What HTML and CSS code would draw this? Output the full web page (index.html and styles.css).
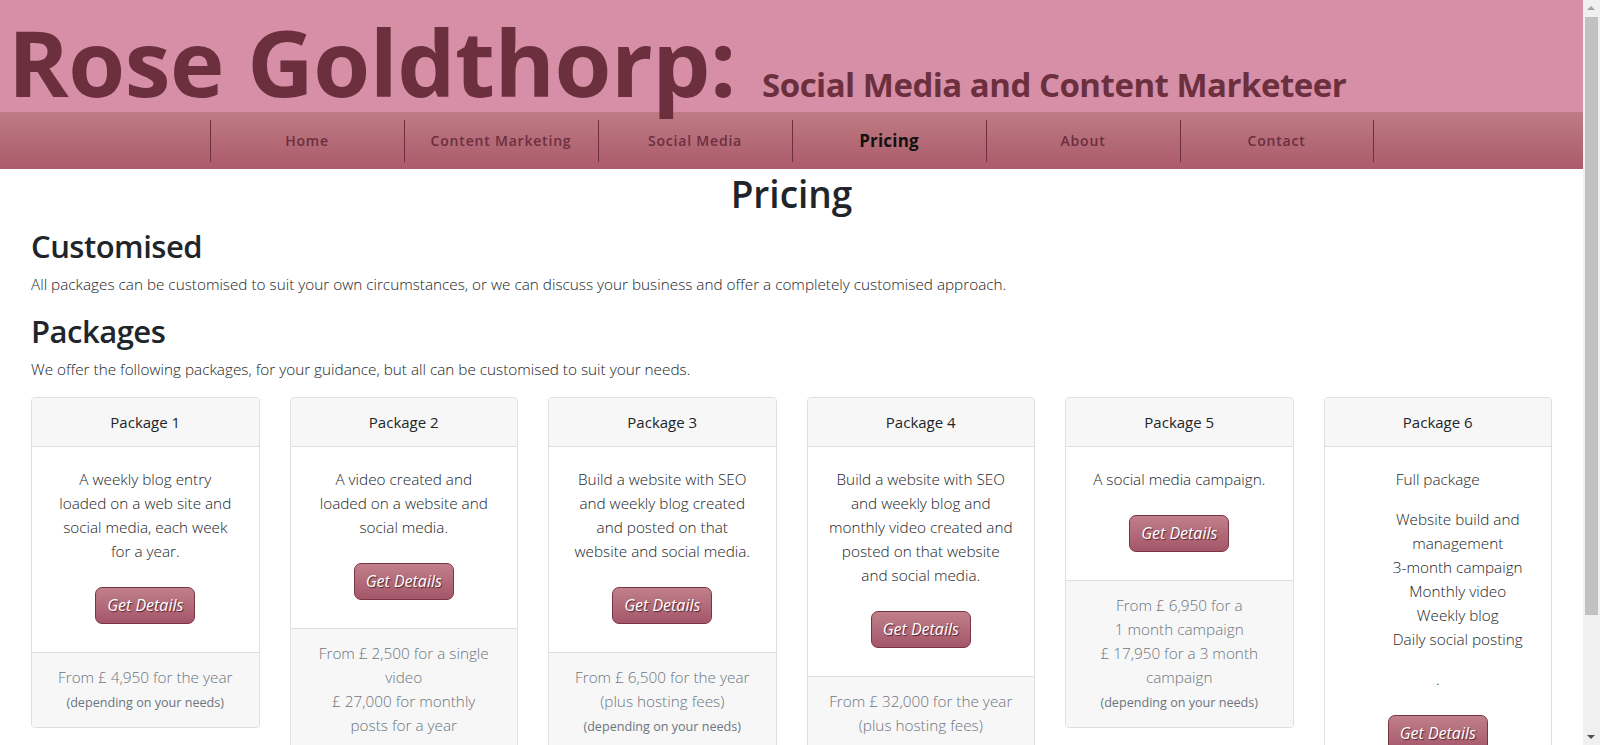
FILE: index.html
```html
<!DOCTYPE html>
<html lang="en">
<head>
<meta charset="utf-8">
<title>Rose Goldthorp: Pricing</title>
<link rel="stylesheet" href="styles.css">
</head>
<body>
<header class="masthead">
  <h1 class="site-title">Rose Goldthorp: <span class="tagline">Social Media and Content Marketeer</span></h1>
</header>
<nav class="mainnav">
  <ul class="nav-list">
    <li class="nav-item"><a href="#">Home</a></li>
    <li class="nav-item"><a href="#">Content Marketing</a></li>
    <li class="nav-item"><a href="#">Social Media</a></li>
    <li class="nav-item active"><a href="#">Pricing</a></li>
    <li class="nav-item"><a href="#">About</a></li>
    <li class="nav-item"><a href="#">Contact</a></li>
  </ul>
</nav>
<main class="content">
  <h1 class="page-title">Pricing</h1>
  <h2 class="section-title">Customised</h2>
  <p class="lead-text">All packages can be customised to suit your own circumstances, or we can discuss your business and offer a completely customised approach.</p>
  <h2 class="section-title">Packages</h2>
  <p class="lead-text">We offer the following packages, for your guidance, but all can be customised to suit your needs.</p>

  <div class="cards">
    <div class="card">
      <div class="card-header">Package 1</div>
      <div class="card-body">
        <p class="card-text">A weekly blog entry<br>loaded on a web site and<br>social media, each week<br>for a year.</p>
        <div class="btn-wrap"><a class="btn" href="#">Get Details</a></div>
      </div>
      <div class="card-footer">From £ 4,950 for the year<br><small>(depending on your needs)</small></div>
    </div>

    <div class="card">
      <div class="card-header">Package 2</div>
      <div class="card-body">
        <p class="card-text">A video created and<br>loaded on a website and<br>social media.</p>
        <div class="btn-wrap"><a class="btn" href="#">Get Details</a></div>
      </div>
      <div class="card-footer">From £ 2,500 for a single<br>video<br>£ 27,000 for monthly<br>posts for a year<br><small>(depending on your needs)</small></div>
    </div>

    <div class="card">
      <div class="card-header">Package 3</div>
      <div class="card-body">
        <p class="card-text">Build a website with SEO<br>and weekly blog created<br>and posted on that<br>website and social media.</p>
        <div class="btn-wrap"><a class="btn" href="#">Get Details</a></div>
      </div>
      <div class="card-footer">From £ 6,500 for the year<br>(plus hosting fees)<br><small>(depending on your needs)</small></div>
    </div>

    <div class="card">
      <div class="card-header">Package 4</div>
      <div class="card-body">
        <p class="card-text">Build a website with SEO<br>and weekly blog and<br>monthly video created and<br>posted on that website<br>and social media.</p>
        <div class="btn-wrap"><a class="btn" href="#">Get Details</a></div>
      </div>
      <div class="card-footer">From £ 32,000 for the year<br>(plus hosting fees)<br><small>(depending on your needs)</small></div>
    </div>

    <div class="card">
      <div class="card-header">Package 5</div>
      <div class="card-body">
        <p class="card-text">A social media campaign.</p>
        <div class="btn-wrap"><a class="btn" href="#">Get Details</a></div>
      </div>
      <div class="card-footer">From £ 6,950 for a<br>1 month campaign<br>£ 17,950 for a 3 month<br>campaign<br><small>(depending on your needs)</small></div>
    </div>

    <div class="card">
      <div class="card-header">Package 6</div>
      <div class="card-body">
        <p class="card-text">Full package</p>
        <ul class="feature-list">
          <li>Website build and<br>management</li>
          <li>3-month campaign</li>
          <li>Monthly video</li>
          <li>Weekly blog</li>
          <li>Daily social posting</li>
        </ul>
        <p class="card-text">.</p>
        <div class="btn-wrap"><a class="btn" href="#">Get Details</a></div>
      </div>
      <div class="card-footer">From £ 45,000 for the year<br>(plus hosting fees)<br><small>(depending on your needs)</small></div>
    </div>
  </div>
</main>

<div class="scrollbar" aria-hidden="true">
  <div class="sb-arrow sb-up"></div>
  <div class="sb-track"><div class="sb-thumb"></div></div>
  <div class="sb-arrow sb-down"></div>
</div>
</body>
</html>
```
FILE: styles.css
```css
* { box-sizing: border-box; }

html, body {
  margin: 0;
  padding: 0;
}

body {
  margin-right: 17px;
  font-family: "Open Sans", "Liberation Sans", sans-serif;
  font-size: 16px;
  font-weight: 300;
  line-height: 24px;
  color: #212529;
  background: #ffffff;
}

/* ---------- masthead ---------- */
.masthead {
  background: #d68fa6;
  height: 112px;
  padding: 12px 0 0 8px;
}

.site-title {
  margin: 0;
  font-family: "Open Sans", sans-serif;
  font-weight: 700;
  font-size: 92px;
  line-height: 100px;
  letter-spacing: -0.5px;
  color: #6b2f3e;
  white-space: nowrap;
}

.tagline {
  font-size: 33px;
  letter-spacing: -0.5px;
  margin-left: 3px;
}

/* ---------- navigation ---------- */
.mainnav {
  height: 57px;
  background: linear-gradient(to bottom, #be7c84 0%, #ab5a6a 100%);
  padding: 8px 0 7px;
}

.nav-list {
  list-style: none;
  margin: 0;
  padding: 0;
  display: flex;
  justify-content: center;
}

.nav-item {
  width: 194px;
  height: 42px;
  border-left: 1px solid #6e2f3f;
  display: flex;
  align-items: center;
  justify-content: center;
}

.nav-item:last-child {
  border-right: 1px solid #6e2f3f;
}

.nav-item a {
  font-family: "Open Sans", sans-serif;
  font-weight: 600;
  font-size: 14px;
  letter-spacing: 0.8px;
  color: #6b2f3e;
  text-decoration: none;
}

.nav-item.active a {
  color: #111111;
  font-weight: 700;
  font-size: 17px;
  letter-spacing: 0.2px;
}

/* ---------- content ---------- */
.content {
  padding: 0 31px;
}

.page-title {
  margin: 4px 0 0;
  text-align: center;
  font-size: 37px;
  line-height: 42px;
  font-weight: 600;
  letter-spacing: 0;
}

.section-title {
  margin: 12px 0 7px;
  font-size: 31px;
  line-height: 38px;
  font-weight: 600;
  letter-spacing: -0.5px;
}

.lead-text {
  margin: 0 0 16px;
  font-size: 15.3px;
}

.lead-text + .section-title {
  margin-top: 4px;
}

/* ---------- cards ---------- */
.cards {
  display: grid;
  grid-template-columns: repeat(6, 1fr);
  column-gap: 30px;
  align-items: start;
  margin-top: 16px;
}

.card {
  border: 1px solid #dfdfdf;
  border-radius: 4px;
  text-align: center;
  background: #ffffff;
  overflow: hidden;
}

.card-header {
  background: #f7f7f7;
  border-bottom: 1px solid #dfdfdf;
  padding: 12px 10px;
  font-size: 15px;
  font-weight: 400;
  line-height: 24px;
}

.card-body {
  padding: 20px 10px;
}

.card-text {
  margin: 0 0 24px;
  font-size: 15.3px;
}

.card-body .card-text:first-child:not(:last-of-type) {
  margin-bottom: 16px;
}

.feature-list {
  list-style: none;
  margin: 0 0 16px;
  padding-left: 40px;
  font-size: 15.3px;
}

.btn-wrap {
  margin-bottom: 8px;
}

.btn {
  display: inline-block;
  padding: 6px 11px;
  font-size: 16px;
  line-height: 23px;
  font-style: italic;
  font-weight: 400;
  color: #ffffff;
  text-decoration: none;
  text-shadow: 1px 1px 1px rgba(60, 20, 30, 0.8);
  background: linear-gradient(to bottom, #c0808a 0%, #a4566a 100%);
  border: 1px solid #7b3446;
  border-radius: 7px;
}

.card-footer {
  background: #f7f7f7;
  border-top: 1px solid #dfdfdf;
  padding: 12px 10px;
  color: #6c757d;
  font-size: 15.3px;
  line-height: 24px;
}

.card-footer small {
  font-size: 12.6px;
  font-weight: 400;
}

/* ---------- window scrollbar ---------- */
.scrollbar {
  position: fixed;
  top: 0;
  right: 0;
  width: 17px;
  height: 100vh;
  background: #f0f0f0;
  display: flex;
  flex-direction: column;
}

.sb-arrow {
  height: 17px;
  flex: none;
  position: relative;
}

.sb-arrow::after {
  content: "";
  position: absolute;
  left: 4px;
  top: 6px;
  border-left: 4px solid transparent;
  border-right: 4px solid transparent;
}

.sb-up::after {
  border-bottom: 4px solid #a3a3a3;
}

.sb-down::after {
  top: 7px;
  border-top: 4px solid #505050;
}

.sb-track {
  flex: 1;
  padding: 0 2px;
}

.sb-thumb {
  height: 598px;
  background: #c1c1c1;
}
```
